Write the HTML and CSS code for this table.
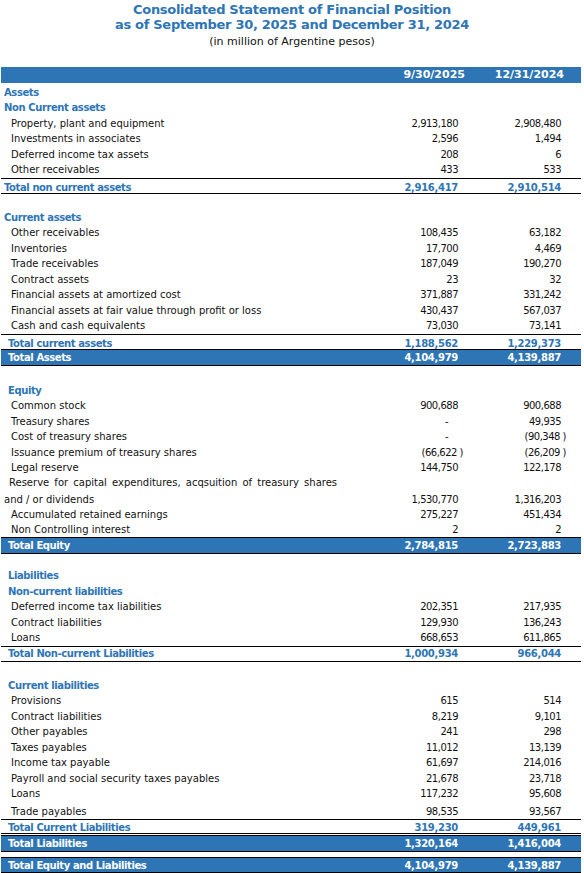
FILE: index.html
```html
<!DOCTYPE html>
<html lang="en">

<head>
    <meta charset="UTF-8">
    <meta name="viewport" content="width=device-width, initial-scale=1.0">
    <title>Consolidated Statement of Financial Position</title>
    <link rel="stylesheet" href="styles.css">
</head>

<body>
    <div class="title">
        <h1>Consolidated Statement of Financial Position<br>as of September 30, 2025 and December 31, 2024</h1>
        <p class="unit">(in million of Argentine pesos)</p>
    </div>

    <div class="statement">
        <div class="row head"><span></span><span class="num">9/30/2025</span><span class="num">12/31/2024</span></div>

        <!-- Assets -->
        <div class="row section"><span>Assets</span></div>
        <div class="row section"><span>Non Current assets</span></div>
        <div class="row item"><span>Property, plant and equipment</span><span class="num">2,913,180</span><span class="num">2,908,480</span></div>
        <div class="row item"><span>Investments in associates</span><span class="num">2,596</span><span class="num">1,494</span></div>
        <div class="row item"><span>Deferred income tax assets</span><span class="num">208</span><span class="num">6</span></div>
        <div class="row item"><span>Other receivables</span><span class="num">433</span><span class="num">533</span></div>
        <div class="row total"><span>Total non current assets</span><span class="num">2,916,417</span><span class="num">2,910,514</span></div>
        <div class="row blank"></div>

        <div class="row section"><span>Current assets</span></div>
        <div class="row item"><span>Other receivables</span><span class="num">108,435</span><span class="num">63,182</span></div>
        <div class="row item"><span>Inventories</span><span class="num">17,700</span><span class="num">4,469</span></div>
        <div class="row item"><span>Trade receivables</span><span class="num">187,049</span><span class="num">190,270</span></div>
        <div class="row item"><span>Contract assets</span><span class="num">23</span><span class="num">32</span></div>
        <div class="row item"><span>Financial assets at amortized cost</span><span class="num">371,887</span><span class="num">331,242</span></div>
        <div class="row item"><span>Financial assets at fair value through profit or loss</span><span class="num">430,437</span><span class="num">567,037</span></div>
        <div class="row item"><span>Cash and cash equivalents</span><span class="num">73,030</span><span class="num">73,141</span></div>
        <div class="row total deep"><span>Total current assets</span><span class="num">1,188,562</span><span class="num">1,229,373</span></div>
        <div class="row bar deep"><span>Total Assets</span><span class="num">4,104,979</span><span class="num">4,139,887</span></div>
        <div class="row blank tall"></div>

        <!-- Equity -->
        <div class="row section deep"><span>Equity</span></div>
        <div class="row item"><span>Common stock</span><span class="num">900,688</span><span class="num">900,688</span></div>
        <div class="row item"><span>Treasury shares</span><span class="num dash">-</span><span class="num">49,935</span></div>
        <div class="row item"><span>Cost of treasury shares</span><span class="num dash">-</span><span class="num">(90,348 <span class="paren">)</span></span></div>
        <div class="row item"><span>Issuance premium of treasury shares</span><span class="num">(66,622 <span class="paren">)</span></span><span class="num">(26,209 <span class="paren">)</span></span></div>
        <div class="row item"><span>Legal reserve</span><span class="num">144,750</span><span class="num">122,178</span></div>
        <div class="row note"><span>Reserve for capital expenditures, acqsuition of treasury shares</span></div>
        <div class="row wrap"><span>and / or dividends</span><span class="num">1,530,770</span><span class="num">1,316,203</span></div>
        <div class="row item"><span>Accumulated retained earnings</span><span class="num">275,227</span><span class="num">451,434</span></div>
        <div class="row item short"><span>Non Controlling interest</span><span class="num">2</span><span class="num">2</span></div>
        <div class="row bar deep"><span>Total Equity</span><span class="num">2,784,815</span><span class="num">2,723,883</span></div>
        <div class="row blank tight"></div>

        <!-- Liabilities -->
        <div class="row section deep"><span>Liabilities</span></div>
        <div class="row section deep"><span>Non-current liabilities</span></div>
        <div class="row item"><span>Deferred income tax liabilities</span><span class="num">202,351</span><span class="num">217,935</span></div>
        <div class="row item"><span>Contract liabilities</span><span class="num">129,930</span><span class="num">136,243</span></div>
        <div class="row item"><span>Loans</span><span class="num">668,653</span><span class="num">611,865</span></div>
        <div class="row total deep closed"><span>Total Non-current Liabilities</span><span class="num">1,000,934</span><span class="num">966,044</span></div>
        <div class="row blank"></div>

        <div class="row section deep"><span>Current liabilities</span></div>
        <div class="row item"><span>Provisions</span><span class="num">615</span><span class="num">514</span></div>
        <div class="row item"><span>Contract liabilities</span><span class="num">8,219</span><span class="num">9,101</span></div>
        <div class="row item"><span>Other payables</span><span class="num">241</span><span class="num">298</span></div>
        <div class="row item"><span>Taxes payables</span><span class="num">11,012</span><span class="num">13,139</span></div>
        <div class="row item"><span>Income tax payable</span><span class="num">61,697</span><span class="num">214,016</span></div>
        <div class="row item"><span>Payroll and social security taxes payables</span><span class="num">21,678</span><span class="num">23,718</span></div>
        <div class="row item"><span>Loans</span><span class="num">117,232</span><span class="num">95,608</span></div>
        <div class="row item low"><span>Trade payables</span><span class="num">98,535</span><span class="num">93,567</span></div>
        <div class="row total deep double"><span>Total Current Liabilities</span><span class="num">319,230</span><span class="num">449,961</span></div>
        <div class="row bar deep"><span>Total Liabilities</span><span class="num">1,320,164</span><span class="num">1,416,004</span></div>
        <div class="row spacer"></div>
        <div class="row bar deep last"><span>Total Equity and Liabilities</span><span class="num">4,104,979</span><span class="num">4,139,887</span></div>
    </div>
</body>

</html>
```

FILE: styles.css
```css
body {
    margin: 0;
    background: #fff;
    color: #111;
    font-family: "DejaVu Sans", Verdana, sans-serif;
    font-size: 10px;
}

.title {
    text-align: center;
    padding-top: 2px;
}

h1 {
    margin: 0;
    color: #2e75b6;
    font-size: 13px;
    line-height: 15px;
    letter-spacing: -0.3px;
}

.unit {
    margin: 3px 0 0;
    font-size: 11px;
    line-height: 14px;
}

.statement {
    width: 580px;
    margin: 18px 0 0 1px;
}

.row {
    display: grid;
    grid-template-columns: 370px 94px 101px 15px;
    align-items: center;
    box-sizing: border-box;
    height: 15.5px;
    line-height: 14px;
    white-space: nowrap;
}

.row > span:first-child {
    padding-left: 10px;
}

.num {
    text-align: right;
    padding-right: 7px;
    letter-spacing: -0.5px;
}

.row > .num:last-child {
    padding-right: 5px;
}

.paren {
    margin-right: -5px;
}

.dash {
    padding-right: 17px;
}

/* header bar with the dates */
.head {
    height: 16px;
    margin-bottom: 2px;
    background: #2e75b6;
    color: #fff;
    font-weight: bold;
    font-size: 11px;
}

.head .num {
    padding-right: 0;
    letter-spacing: 0;
}

.head > .num:last-child {
    padding-right: 2px;
}

.section,
.total,
.bar {
    font-weight: bold;
    letter-spacing: -0.4px;
}

.section,
.total {
    color: #2e75b6;
}

.row.section > span:first-child,
.row.total > span:first-child {
    padding-left: 3px;
}

.row.deep > span:first-child {
    padding-left: 7px;
}

.total {
    height: 16px;
    border-top: 1px solid #000;
    border-bottom: 1px solid #000;
    padding-top: 2px;
}

.total .num,
.bar .num {
    letter-spacing: -0.3px;
}

.bar {
    height: 17px;
    background: #2e75b6;
    color: #fff;
    border-top: 1px solid #000;
    border-bottom: 1px solid #000;
    padding-top: 1px;
}

.total + .bar {
    border-top: none;
    height: 16px;
}

.double {
    height: 16.5px;
    padding-top: 1px;
    border-bottom: 3px double #000;
}

.closed {
    height: 16px;
    padding-top: 0;
}

.low {
    height: 17px;
    padding-top: 3px;
}

.blank {
    height: 16px;
}

.blank.tall {
    height: 17px;
}

.blank.tight {
    height: 15px;
}

.spacer {
    height: 5px;
}

.last {
    height: 16px;
}

.note {
    height: 13px;
}

.row.note > span:first-child {
    padding-left: 8px;
    word-spacing: 2px;
}

.wrap {
    height: 18px;
    padding-top: 3px;
}

.row.wrap > span:first-child {
    padding-left: 3px;
}

.short {
    height: 14px;
}
```
